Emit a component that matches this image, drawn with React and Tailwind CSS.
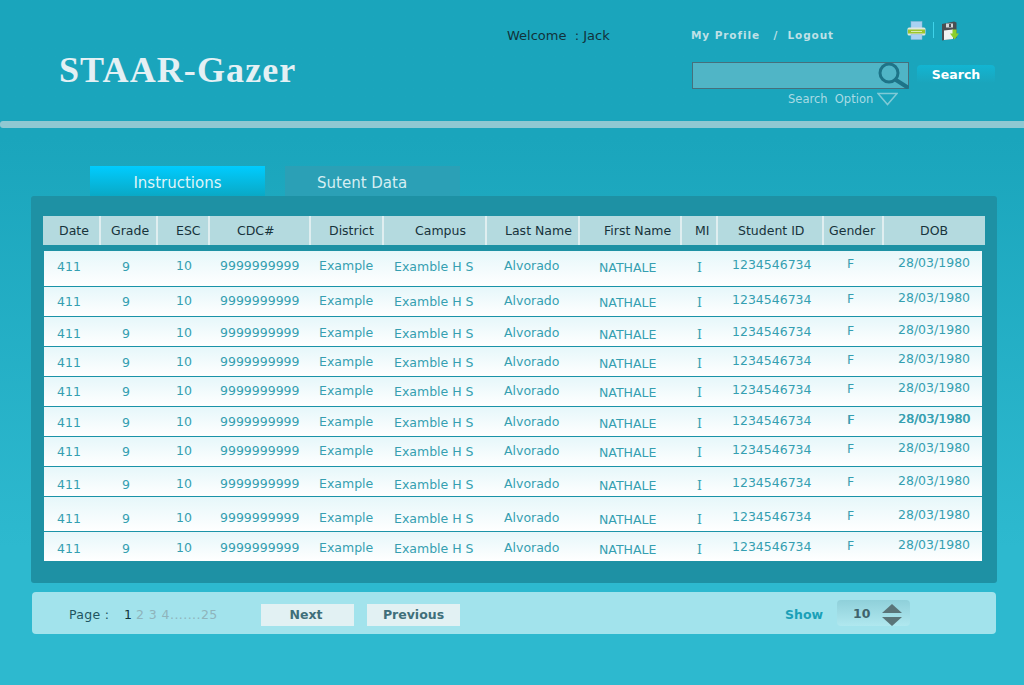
import React from "react";

const headers = [
  { label: "Date", cls: "pl-[16px]" },
  { label: "Grade", cls: "pl-[10px]" },
  { label: "ESC", cls: "pl-[18px]" },
  { label: "CDC#", cls: "pl-[27px]" },
  { label: "District", cls: "pl-[18px]" },
  { label: "Campus", cls: "pl-[31px]" },
  { label: "Last Name", cls: "pl-[18px]" },
  { label: "First Name", cls: "pl-[24px]" },
  { label: "MI", cls: "pl-[13px]" },
  { label: "Student ID", cls: "pl-[20px]" },
  { label: "Gender", cls: "pl-[5px]" },
  { label: "DOB", cls: "pl-[36px]" },
];

// each column sits a little higher or lower than its neighbours
const cols = [
  { value: "411", cls: "pt-[4px]" },
  { value: "9", cls: "pt-[4px]" },
  { value: "10", cls: "pt-[3px]" },
  { value: "9999999999", cls: "pt-[3px]" },
  { value: "Example", cls: "pt-[3px]" },
  { value: "Examble H S", cls: "pt-[4px]" },
  { value: "Alvorado", cls: "pt-[3px]" },
  { value: "NATHALE", cls: "pt-[5px]" },
  { value: "I", cls: "pt-[5px] font-['DejaVu_Serif',serif]" },
  { value: "1234546734", cls: "pt-[2px]" },
  { value: "F", cls: "pt-[1px]" },
  { value: "28/03/1980", cls: "pt-[0px]" },
];

const rows = [
  "h-[36px] pt-[4px]",
  "h-[30px] pt-[3px]",
  "h-[30px] pt-[5px]",
  "h-[30px] pt-[4px]",
  "h-[30px] pt-[3px]",
  "h-[30px] pt-[4px]",
  "h-[30px] pt-[3px]",
  "h-[30px] pt-[6px]",
  "h-[35px] pt-[10px]",
  "h-[29px] pt-[5px]",
];

const PrinterIcon = () => (
  <svg width="19" height="19" viewBox="0 0 19 19">
    <rect x="4" y="0.5" width="11" height="7" fill="#a9d2f2" stroke="#8fb8d8" strokeWidth="0.5" />
    <rect x="0.5" y="6.5" width="18" height="8" rx="1.5" fill="#dfe8e0" />
    <rect x="1" y="8.5" width="17" height="4" fill="#9cc52e" />
    <rect x="4" y="10" width="11" height="1" fill="#d8ecb0" />
    <rect x="4" y="13.5" width="11" height="5" fill="#a9d2f2" stroke="#8fb8d8" strokeWidth="0.5" />
  </svg>
);

const SaveIcon = () => (
  <svg width="18" height="20" viewBox="0 0 18 20">
    <path d="M1 3 L13 0.5 L15.5 1.5 V17 L1 19.5 Z" fill="#4a4f52" />
    <rect x="5" y="2.5" width="7" height="4" fill="#d4d8da" />
    <rect x="8" y="3" width="2" height="3" fill="#4a4f52" />
    <path d="M3 9.5 L12 8.5 V18 L3 19 Z" fill="#f0f3f2" />
    <path d="M11.5 8.5 H15.5 V12.5 H18 L13.5 18.5 L9 12.5 H11.5 Z" fill="#8ccf2c" />
  </svg>
);

const SearchIcon = () => (
  <svg width="34" height="28" viewBox="0 0 34 28">
    <circle cx="13" cy="11" r="9" fill="none" stroke="#1d7488" strokeWidth="3" />
    <path d="M20 18 L31 25" stroke="#1d7488" strokeWidth="4" strokeLinecap="round" />
  </svg>
);

const App = () => {
  return (
    <div className="min-h-[685px] w-[1024px] bg-gradient-to-b from-[#1aa5bc] from-20% to-[#2db9cf] to-80% font-['DejaVu_Sans',sans-serif] overflow-hidden">
      <header className="flex h-[121px]">
        <div className="w-[507px] pl-[59px] pt-[46px]">
          <h1 className="font-['Liberation_Serif',serif] text-[36px] leading-[48px] font-bold tracking-[1.1px] text-[#e4f0f4]">
            STAAR-Gazer
          </h1>
        </div>
        <div className="w-[184px] pt-[28px] text-[13px] leading-[16px] text-[#12323a]">
          Welcome &nbsp;: Jack
        </div>
        <div className="w-[333px]">
          <div className="flex h-[62px]">
            <div className="w-[216px] pt-[28px] text-[10.5px] leading-[14px] font-bold tracking-[0.9px] text-[#bfe0e6]">
              My Profile &nbsp;&nbsp;/ &nbsp;Logout
            </div>
            <div className="flex items-start pt-[21px]">
              <PrinterIcon />
              <span className="mx-[7px] mt-[1px] h-[16px] w-[1px] bg-[#3fd3ea]"></span>
              <SaveIcon />
            </div>
          </div>
          <div className="flex items-start pl-[1px]">
            <div className="flex h-[27px] w-[217px] items-center justify-end border border-[#46707c] bg-[#50b5c6]">
              <div className="-mr-[2px] mt-[1px]">
                <SearchIcon />
              </div>
            </div>
            <button className="mt-[3px] ml-[8px] h-[18px] w-[78px] rounded-t-[4px] bg-gradient-to-b from-[#12b5d2] to-[#1aa5bc] pt-[1px] text-[12.5px] leading-[18px] font-bold text-white">
              Search
            </button>
          </div>
          <div className="flex items-center pl-[97px] pt-[3px] text-[11.5px] leading-[14px] text-[#a9dbe4]">
            <span>Search &nbsp;Option</span>
            <svg className="ml-[4px]" width="21" height="14" viewBox="0 0 21 14">
              <path d="M1 1.5 H20 L10.5 12.5 Z" fill="none" stroke="#7fcad6" strokeWidth="1.5" />
            </svg>
          </div>
        </div>
      </header>
      <div className="h-[7px] rounded-l-[3px] bg-[#8fc8d2]"></div>

      <div className="mt-[38px] ml-[90px] flex gap-[20px]">
        <div className="flex h-[30px] w-[175px] items-center justify-center bg-gradient-to-b from-[#00ccff] to-[#09a9c6] pt-[4px] text-[15px] text-[#dff4f8]">
          Instructions
        </div>
        <div className="flex h-[30px] w-[175px] items-center bg-[#2ba0b6] pt-[4px] pl-[32px] text-[15px] text-[#d5eef2]">
          Sutent Data
        </div>
      </div>

      <main className="ml-[31px] h-[387px] w-[966px] rounded-[3px] bg-[#1e91a4] pt-[20px] pl-[12px]">
        <div className="grid h-[29px] w-[942px] grid-cols-[58px_57px_52px_101px_73px_103px_93px_102px_36px_106px_60px_101px] bg-[#b4dadf] text-[12.5px] text-[#17333b]">
          {headers.map((h, i) => (
            <div
              className={`flex items-center pt-[2px] ${h.cls} ${i < 11 ? "border-r-2 border-[#dfeef0]" : ""}`}
              key={i}
            >
              {h.label}
            </div>
          ))}
        </div>
        <div className="mt-[6px] ml-[1px] w-[938px]">
          {rows.map((row, r) => (
            <div
              className={`grid grid-cols-[65px_54px_44px_99px_75px_110px_95px_98px_35px_115px_51px_84px] items-start border-b border-[#1a93a8] bg-gradient-to-b from-[#e6f7fa] to-white pl-[13px] text-[12.5px] leading-[16px] text-[#359fb1] last:border-b-0 ${row}`}
              key={r}
            >
              {cols.map((c, i) => (
                <div
                  className={`${c.cls} ${r === 5 && i > 9 ? "[text-shadow:0.6px_0_0_currentColor]" : ""}`}
                  key={i}
                >
                  {c.value}
                </div>
              ))}
            </div>
          ))}
        </div>
      </main>

      <footer className="mt-[9px] ml-[32px] flex h-[42px] w-[964px] items-center rounded-[4px] bg-[#a2e3ec] pt-[4px] text-[12.5px]">
        <span className="ml-[37px] w-[55px] tracking-[0.3px] text-[#1f5560]">Page :</span>
        <span className="w-[137px] text-[#12323a]">
          1 <span className="tracking-[0.45px] text-[#8fb4bb]">2 3 4.......25</span>
        </span>
        <button className="h-[22px] w-[93px] bg-[#e2f1f3] pr-[3px] font-bold text-[#3f6f7a]">
          Next
        </button>
        <button className="ml-[13px] h-[22px] w-[93px] bg-[#e2f1f3] font-bold text-[#3f6f7a]">
          Previous
        </button>
        <span className="ml-[325px] w-[52px] font-bold text-[#1aa0b8]">Show</span>
        <div className="-mt-[4px] flex h-[26px] w-[73px] rounded-[4px] bg-gradient-to-b from-[#8fd0da] to-[#b0e8ef] pl-[16px]">
          <span className="w-[29px] self-end pb-[2px] font-bold text-[#3f636c]">10</span>
          <svg className="self-end" width="20" height="22" viewBox="0 0 20 22">
            <path d="M10 0 L20 9 H0 Z" fill="#5a7478" />
            <path d="M0 13 H20 L10 22 Z" fill="#5a7478" />
          </svg>
        </div>
      </footer>
    </div>
  );
};

export default App;
